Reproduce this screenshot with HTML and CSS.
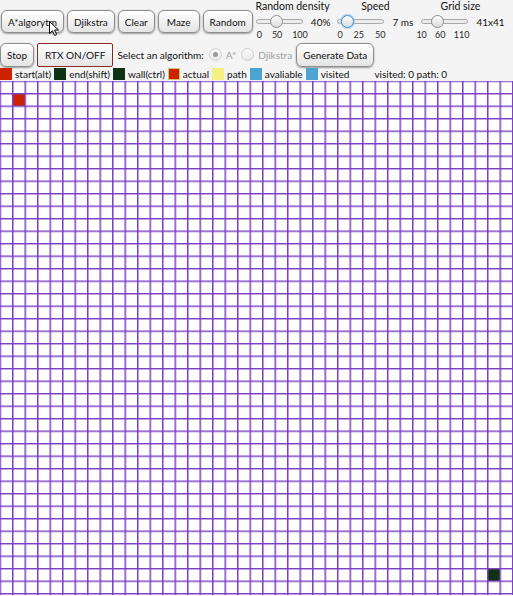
FILE: index.html
```html
<!DOCTYPE html>
<html>
<head>
<meta charset="utf-8">
<title>Pathfinding</title>
<link rel="stylesheet" href="styles.css">
</head>
<body>
<div class="app">
  <div class="row1">
    <div class="btns">
      <button class="btn">A*algorytm</button>
      <button class="btn">Djikstra</button>
      <button class="btn">Clear</button>
      <button class="btn btn-wide">Maze</button>
      <button class="btn">Random</button>
    </div>
    <div class="sliders">
      <div class="sg sg-density">
        <div class="slabel">Random density</div>
        <div class="srow">
          <div class="track"><span class="thumb" style="left:13.5px"></span></div>
          <span class="sval">40%</span>
        </div>
        <div class="ticks"><span>0</span><span>50</span><span>100</span></div>
      </div>
      <div class="sg sg-speed">
        <div class="slabel">Speed</div>
        <div class="srow">
          <div class="track"><span class="thumb focused" style="left:2.5px"></span></div>
          <span class="sval">7 ms</span>
        </div>
        <div class="ticks"><span>0</span><span>25</span><span>50</span></div>
      </div>
      <div class="sg sg-size">
        <div class="slabel">Grid size</div>
        <div class="srow">
          <div class="track"><span class="thumb" style="left:8.5px"></span></div>
          <span class="sval">41x41</span>
        </div>
        <div class="ticks"><span>10</span><span>60</span><span>110</span></div>
      </div>
    </div>
  </div>

  <div class="row2">
    <button class="btn">Stop</button>
    <button class="btn btn-rtx">RTX ON/OFF</button>
    <span class="prompt">Select an algorithm:</span>
    <label class="radio disabled"><span class="rdot checked"></span>A*</label>
    <label class="radio disabled"><span class="rdot"></span>Djikstra</label>
    <button class="btn btn-gen">Generate Data</button>
  </div>

  <div class="legend">
    <span class="sw sw-start"></span><span class="lt">start(alt)</span>
    <span class="sw sw-end"></span><span class="lt">end(shift)</span>
    <span class="sw sw-wall"></span><span class="lt">wall(ctrl)</span>
    <span class="sw sw-actual"></span><span class="lt">actual</span>
    <span class="sw sw-path"></span><span class="lt">path</span>
    <span class="sw sw-avail"></span><span class="lt">avaliable</span>
    <span class="sw sw-visited"></span><span class="lt">visited</span>
    <span class="stats">visited: 0 path: 0</span>
  </div>

  <svg class="grid" width="513" height="516" viewBox="0 0 513 516">
    <defs>
      <pattern id="cells" patternUnits="userSpaceOnUse" x="-0.5" y="-0.5" width="12.5" height="12.5">
        <path d="M0 0H12.5V1.5H0Z M0 0H1.5V12.5H0Z" fill="#7b3fc6"/>
      </pattern>
    </defs>
    <rect x="0" y="0" width="513" height="516" fill="#ffffff"/>
    <rect x="12.5" y="12.5" width="12.5" height="12.5" fill="#cc2200"/>
    <rect x="487.5" y="487.5" width="12.5" height="12.5" fill="#0f3312"/>
    <rect x="0" y="0" width="513" height="514" fill="url(#cells)"/>
  </svg>

  <svg class="cursor" width="11" height="16" viewBox="0 0 11 16">
    <path d="M0.5 0.5V12.5L3.5 9.7L5.6 14.5L7.6 13.6L5.6 9H9.5Z" fill="#fff" stroke="#000" stroke-width="1" stroke-linejoin="round"/>
  </svg>
</div>
</body>
</html>
```

FILE: styles.css
```css
* { box-sizing: border-box; }

body {
  margin: 0;
  background: #f4f4f4;
  font-family: Lato, "Noto Sans", sans-serif;
  font-size: 10px;
  color: #111;
  overflow: hidden;
}

.app {
  position: relative;
  width: 513px;
  height: 596px;
}

/* ---------- buttons ---------- */
.btn {
  flex: none;
  height: 23px;
  margin: 0;
  padding: 0 6px;
  font: inherit;
  color: #111;
  border: 1px solid #8d8d8d;
  border-radius: 6px;
  background: linear-gradient(#ffffff, #e4e4e4);
  box-shadow: 0 1px 2px rgba(0, 0, 0, 0.35), 0 0 1px rgba(0, 0, 0, 0.2), inset 0 1px 0 #fff;
  white-space: nowrap;
}

.btn-wide { padding: 0 8px; }

.btn-rtx {
  border: 1.5px solid #8a2a22;
  border-radius: 2px;
  box-shadow: none;
  padding: 0 7px;
}

/* ---------- first row ---------- */
.row1 {
  display: flex;
  height: 41px;
}

.btns {
  flex: none;
  display: flex;
  align-items: flex-start;
  gap: 3px;
  padding: 10px 0 0 1px;
}

.sliders {
  flex: none;
  display: flex;
  margin-left: 2px;
  white-space: nowrap;
}

.sg {
  flex: none;
  display: flex;
  flex-direction: column;
  align-items: center;
}

.slabel {
  height: 13px;
  line-height: 13px;
  font-size: 10.5px;
}

.srow {
  align-self: stretch;
  display: flex;
  align-items: center;
  gap: 8px;
  height: 15px;
  margin-top: 1px;
}

.sval { font-size: 10px; }

.track {
  position: relative;
  flex: none;
  width: 47px;
  height: 5px;
  border: 1px solid #a9a9a9;
  border-radius: 3px;
  background: #ececec;
}

.thumb {
  position: absolute;
  top: -5px;
  width: 13px;
  height: 13px;
  border-radius: 50%;
  border: 1px solid #8f8f8f;
  background: linear-gradient(#fdfdfd, #dcdcdc);
}

.thumb.focused {
  border: 1.5px solid #3c8fd6;
  box-shadow: 0 0 0 1px #a8d0f0;
}

.ticks {
  align-self: flex-start;
  display: flex;
  justify-content: space-between;
  font-size: 9px;
  line-height: 10px;
  margin-top: 1px;
  color: #2a2a2a;
}

.sg-density .srow { margin-left: 1px; }
.sg-density .ticks { width: 51px; margin-left: 2px; }

.sg-speed { margin-left: 7px; }
.sg-speed .ticks { width: 48px; }

.sg-size { margin-left: 3px; }
.sg-size .srow { margin-left: 5px; }
.sg-size .ticks { width: 53px; }

/* ---------- second row ---------- */
.row2 {
  display: flex;
  align-items: center;
  height: 26px;
  padding-top: 1px;
  white-space: nowrap;
}

.row2 .btn { height: 24px; }

.row2 .btn-rtx { margin-left: 3px; }

.prompt {
  margin-left: 4px;
}

.radio {
  display: flex;
  align-items: center;
  gap: 4px;
}

.radio.disabled { color: #a0a0a0; }

.radio:first-of-type { margin-left: 5px; }
.radio + .radio { margin-left: 5px; }

.rdot {
  position: relative;
  width: 13px;
  height: 13px;
  border-radius: 50%;
  border: 1px solid #cfcfcf;
  background: linear-gradient(#fafafa, #e9e9e9);
}

.rdot.checked::after {
  content: "";
  position: absolute;
  left: 3px;
  top: 3px;
  width: 5px;
  height: 5px;
  border-radius: 50%;
  background: #9a9a9a;
}

.btn-gen { margin-left: 4px; }

/* ---------- legend ---------- */
.legend {
  display: flex;
  align-items: center;
  height: 12px;
  margin-top: 1px;
  line-height: 12px;
  white-space: nowrap;
}

.sw {
  width: 12px;
  height: 12px;
  flex: none;
}

.lt { margin: 0 3px; }

.sw-start { background: #cc2200; }
.sw-end { background: #0f3312; }
.sw-wall { background: #0f3312; }
.sw-actual { background: #cc2200; border: 1px solid #d8c468; }
.sw-path { background: #f3ef82; }
.sw-avail { background: #4ba3cf; }
.sw-visited { background: #4ba3cf; }

.stats { margin-left: 22px; }

/* ---------- grid ---------- */
.grid {
  display: block;
  margin-top: 1px;
}

/* ---------- mouse pointer ---------- */
.cursor {
  position: absolute;
  left: 49px;
  top: 21px;
}
```
